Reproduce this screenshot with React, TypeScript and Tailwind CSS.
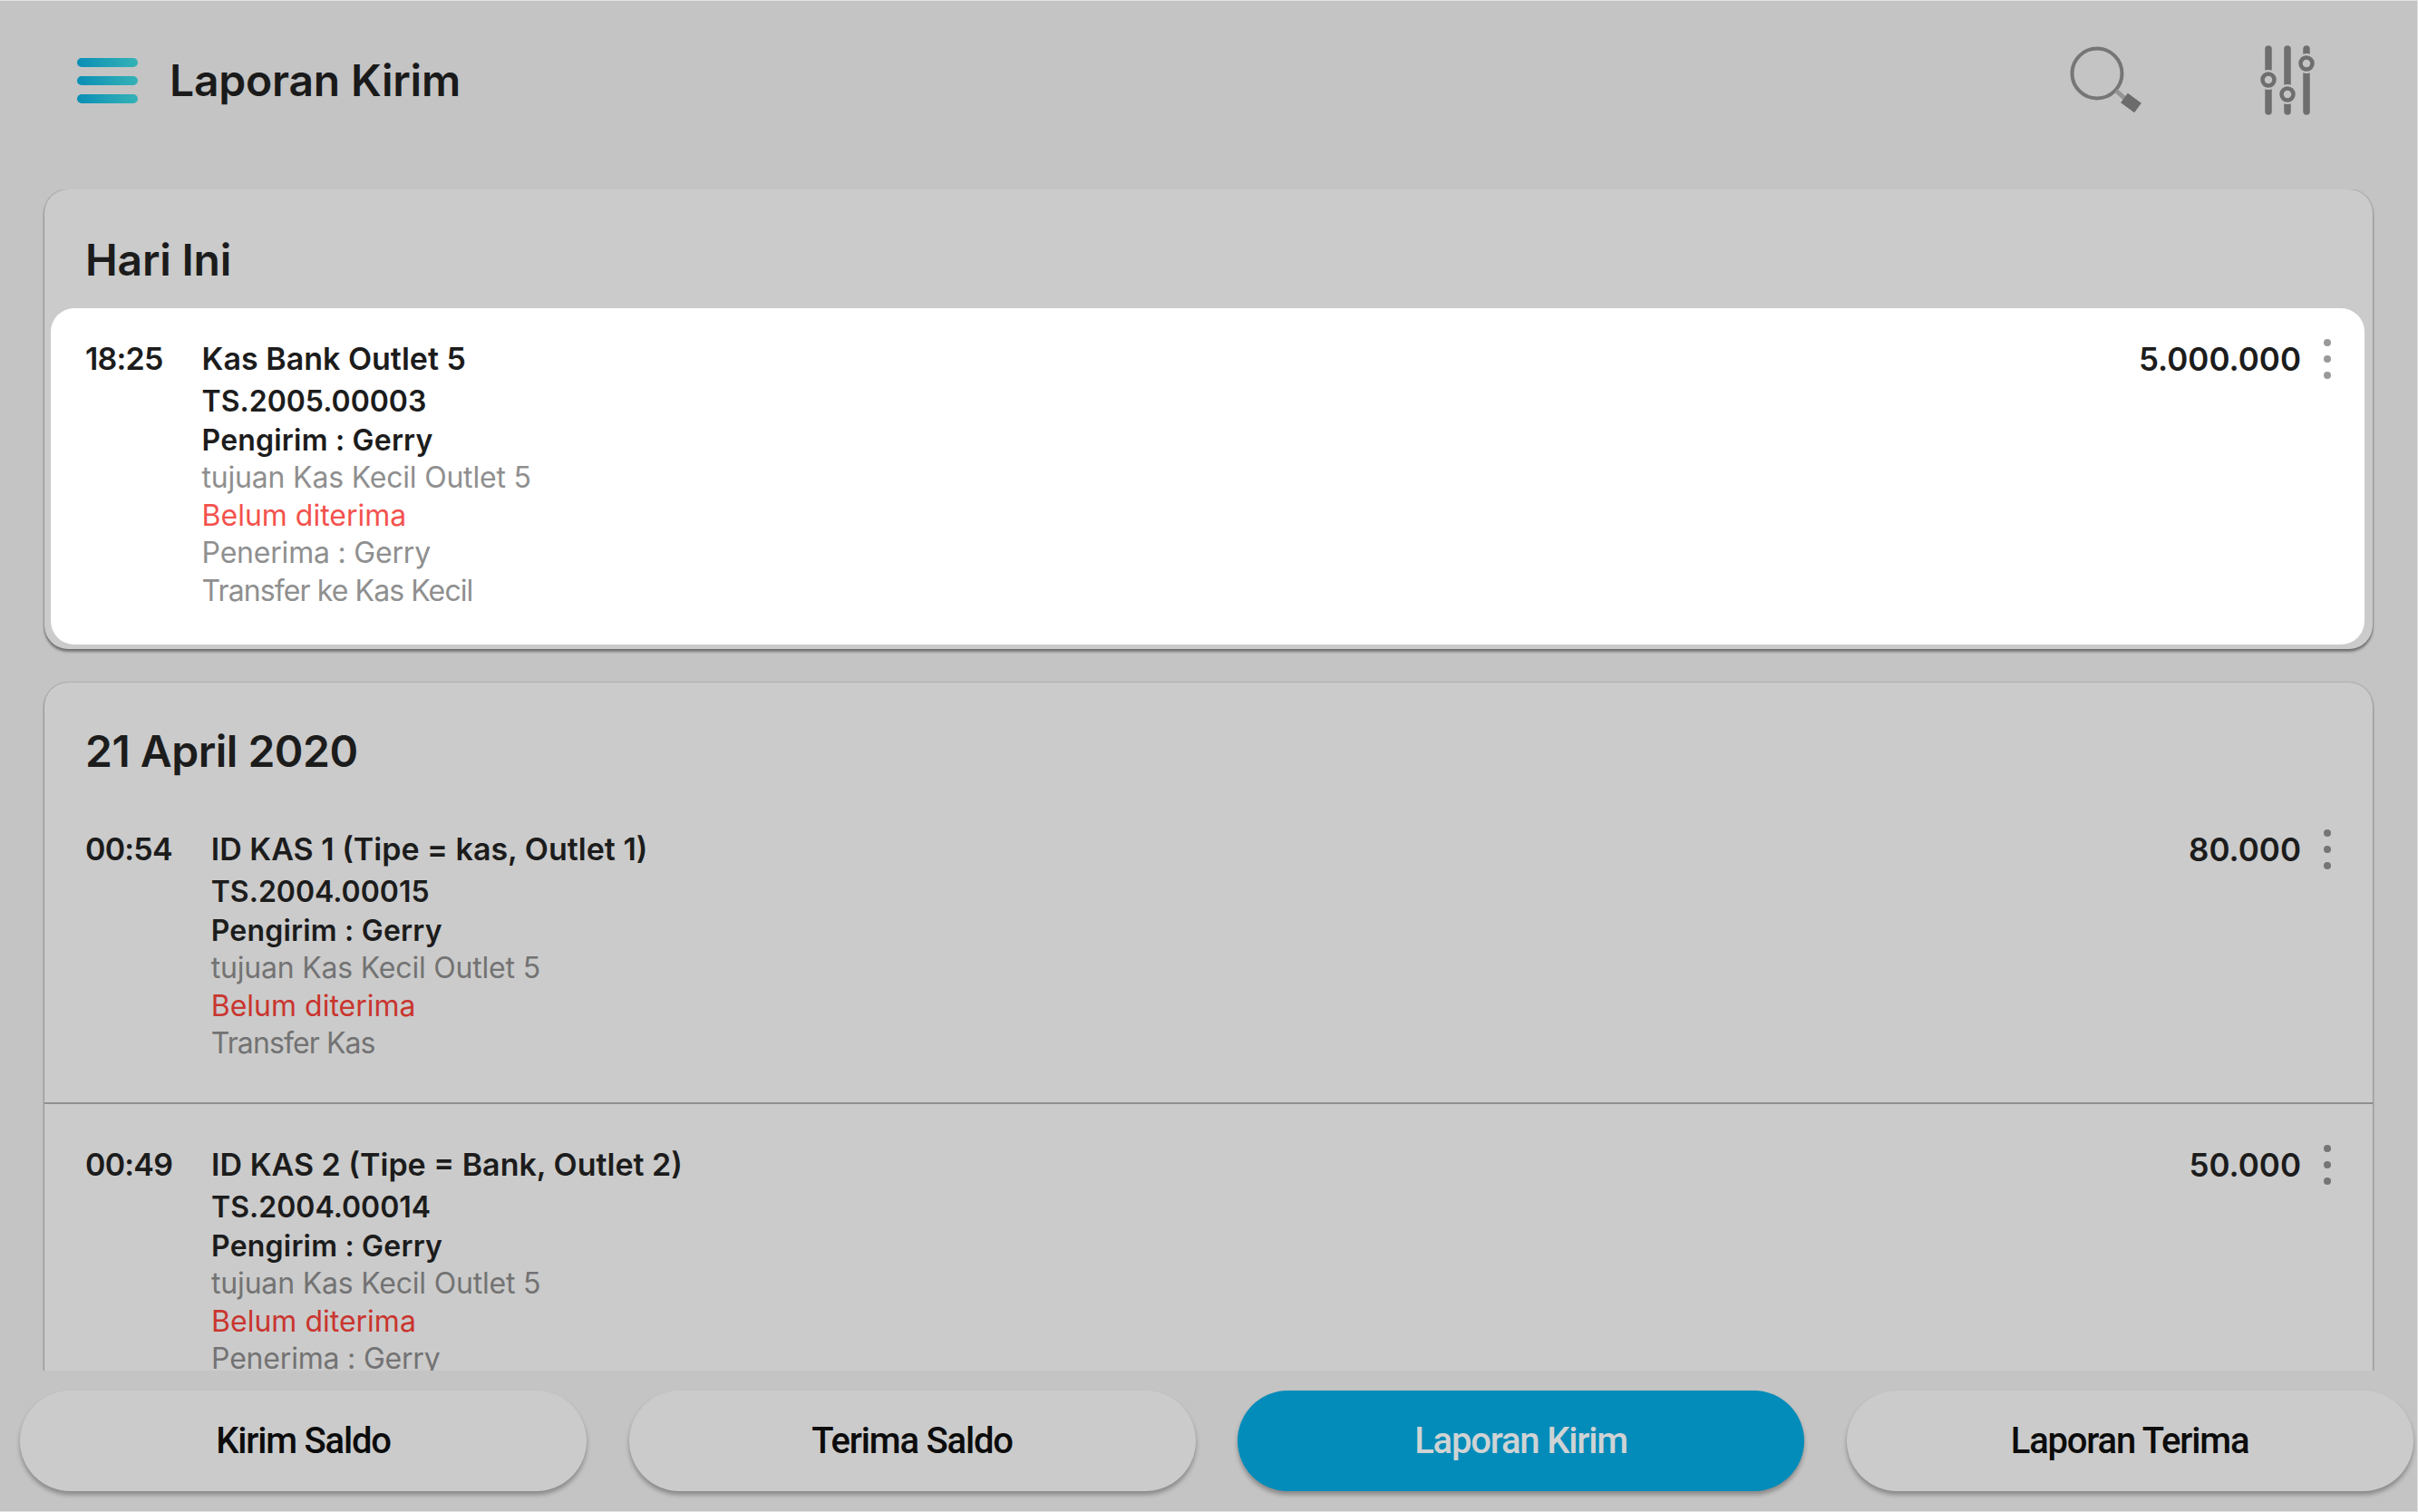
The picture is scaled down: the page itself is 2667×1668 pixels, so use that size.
const FONT = "font-['Inter','Noto_Sans',sans-serif]";

type RowData = {
  time: string;
  title: string;
  code: string;
  dest: string;
  receiver?: string;
  note?: string;
  amount: string;
};

function Dots({ color }: { color: string }) {
  return (
    <svg width="10" height="44" viewBox="0 0 10 44" className="block shrink-0" aria-hidden="true">
      <circle cx="5" cy="4" r="4" fill={color} />
      <circle cx="5" cy="22" r="4" fill={color} />
      <circle cx="5" cy="40" r="4" fill={color} />
    </svg>
  );
}

function RowBody({ d, active }: { d: RowData; active?: boolean }) {
  const muted = active ? "text-[#8f8f8f]" : "text-[#737373]";
  const red = active ? "text-[#f4524d]" : "text-[#c9352e]";
  return (
    <div className="flex items-start">
      <div className="text-[34px] leading-[48px] font-semibold tracking-[-0.8px] text-[#1c1c1c] mr-[43px]">{d.time}</div>
      <div className="flex-1 min-w-0">
        <div className="text-[34px] leading-[48px] font-semibold text-[#1c1c1c]">{d.title}</div>
        <div className="text-[32px] leading-[45px] font-semibold text-[#1c1c1c]">{d.code}</div>
        <div className="text-[32px] leading-[41px] font-semibold tracking-[0.2px] text-[#1c1c1c]">Pengirim : Gerry</div>
        <div className={`text-[32px] leading-[42px] tracking-[-0.2px] ${muted}`}>{d.dest}</div>
        <div className={`text-[32px] leading-[41px] ${red}`}>Belum diterima</div>
        {d.receiver && <div className={`text-[32px] leading-[42px] tracking-[-0.2px] ${muted}`}>{d.receiver}</div>}
        {d.note && <div className={`text-[32px] leading-[42px] tracking-[-0.9px] ${muted}`}>{d.note}</div>}
      </div>
      <div className="flex items-center gap-[24px]">
        <div className="text-[35px] leading-[48px] font-semibold text-[#1c1c1c]">{d.amount}</div>
        <Dots color={active ? "#9a9a9a" : "#757575"} />
      </div>
    </div>
  );
}

function BottomButton({ label, active }: { label: string; active?: boolean }) {
  return (
    <button
      className={`w-[625px] h-[111px] shrink-0 rounded-[56px] flex items-center justify-center font-['Roboto',sans-serif] text-[40px] font-medium tracking-[-1.2px] shadow-[0_4px_5px_rgba(0,0,0,0.3)] ${
        active ? "bg-[#038cba] text-[#cfd3d4]" : "bg-[#cbcbcb] text-[#0c0c0c]"
      }`}
    >
      {label}
    </button>
  );
}

function SearchIcon() {
  return (
    <svg width="84" height="84" viewBox="0 0 84 84" className="block" aria-hidden="true">
      <circle cx="32" cy="31" r="27.5" fill="none" stroke="#767676" strokeWidth="4" />
      <path d="M53 50 L63 59" stroke="#959595" strokeWidth="5" fill="none" />
      <path d="M62 58 L77 69" stroke="#6c6c6c" strokeWidth="13" fill="none" />
    </svg>
  );
}

function SliderIcon() {
  const bar = "#6e6e6e";
  const bg = "#c4c4c4";
  return (
    <svg width="64" height="80" viewBox="0 0 64 80" className="block" aria-hidden="true">
      <path d="M11 4 V 73" stroke={bar} strokeWidth="7.5" strokeLinecap="round" />
      <path d="M32 4 V 73" stroke={bar} strokeWidth="7.5" strokeLinecap="round" />
      <path d="M53 4 V 73" stroke={bar} strokeWidth="7.5" strokeLinecap="round" />
      <circle cx="11" cy="38" r="11" fill={bg} />
      <circle cx="32" cy="54" r="11" fill={bg} />
      <circle cx="53" cy="20" r="11" fill={bg} />
      <circle cx="11" cy="38" r="6.5" fill={bg} stroke={bar} strokeWidth="4.5" />
      <circle cx="32" cy="54" r="6.5" fill={bg} stroke={bar} strokeWidth="4.5" />
      <circle cx="53" cy="20" r="6.5" fill={bg} stroke={bar} strokeWidth="4.5" />
    </svg>
  );
}

function MenuIcon() {
  return (
    <svg width="67" height="50" viewBox="0 0 67 50" className="block" aria-hidden="true">
      <defs>
        <linearGradient id="menuGrad" x1="0" y1="0" x2="1" y2="0">
          <stop offset="0" stopColor="#0a8fb6" />
          <stop offset="1" stopColor="#34b2b6" />
        </linearGradient>
      </defs>
      <rect x="0" y="0" width="67" height="10" rx="5" fill="url(#menuGrad)" />
      <rect x="0" y="20" width="67" height="10" rx="5" fill="url(#menuGrad)" />
      <rect x="0" y="40" width="67" height="10" rx="5" fill="url(#menuGrad)" />
    </svg>
  );
}

const today: RowData = {
  time: "18:25",
  title: "Kas Bank Outlet 5",
  code: "TS.2005.00003",
  dest: "tujuan Kas Kecil Outlet 5",
  receiver: "Penerima : Gerry",
  note: "Transfer ke Kas Kecil",
  amount: "5.000.000",
};
const apr1: RowData = {
  time: "00:54",
  title: "ID KAS 1 (Tipe = kas, Outlet 1)",
  code: "TS.2004.00015",
  dest: "tujuan Kas Kecil Outlet 5",
  note: "Transfer Kas",
  amount: "80.000",
};
const apr2: RowData = {
  time: "00:49",
  title: "ID KAS 2 (Tipe = Bank, Outlet 2)",
  code: "TS.2004.00014",
  dest: "tujuan Kas Kecil Outlet 5",
  receiver: "Penerima : Gerry",
  amount: "50.000",
};

const cardShadow = "shadow-[0_3px_3px_rgba(0,0,0,0.4),0_0_2px_rgba(0,0,0,0.35)]";

export default function App() {
  return (
    <div className={`${FONT} w-[2667px] h-[1668px] overflow-hidden flex flex-col bg-[#c4c4c4] border-t border-r border-b border-[#e2e2e2]`}>
      <header className="h-[208px] shrink-0 flex items-start justify-between pl-[85px] pr-[111px] pt-[63px]">
        <div className="flex items-center gap-[35px]">
          <MenuIcon />
          <h1 className="text-[48px] leading-[50px] font-semibold tracking-[-0.2px] text-[#1a1a1a]">Laporan Kirim</h1>
        </div>
        <div className="flex items-start gap-[126px] -mt-[14px]">
          <SearchIcon />
          <SliderIcon />
        </div>
      </header>

      <main className="flex-1 min-h-0 overflow-hidden px-[49px]">
        <section className={`bg-[#cbcbcb] rounded-[26px] ${cardShadow} h-[507px] pt-[2px]`}>
          <h2 className="h-[129px] pl-[45px] pt-[51px] text-[48px] leading-[50px] font-semibold tracking-[-0.2px] text-[#1c1c1c]">Hari Ini</h2>
          <div className="ml-[7px] mr-[9px] bg-white rounded-[26px] pt-[32px] pb-[38px] pl-[38px] pr-[36px]">
            <RowBody d={today} active />
          </div>
        </section>

        <section className={`mt-[37px] bg-[#cbcbcb] rounded-t-[26px] ${cardShadow} pb-[40px]`}>
          <h2 className="h-[118px] pl-[45px] pt-[51px] text-[48px] leading-[50px] font-semibold tracking-[-0.5px] text-[#1c1c1c]">21 April 2020</h2>
          <div className="px-[45px] pt-[42px] pb-[44px] border-b-2 border-[#8e8e8e]">
            <RowBody d={apr1} />
          </div>
          <div className="px-[45px] pt-[43px] pb-[45px]">
            <RowBody d={apr2} />
          </div>
        </section>
      </main>

      <footer className="h-[155px] shrink-0 bg-[#c4c4c4] flex items-start gap-[46.5px] pl-[22px] pt-[22px]">
        <BottomButton label="Kirim Saldo" />
        <BottomButton label="Terima Saldo" />
        <BottomButton label="Laporan Kirim" active />
        <BottomButton label="Laporan Terima" />
      </footer>
    </div>
  );
}
